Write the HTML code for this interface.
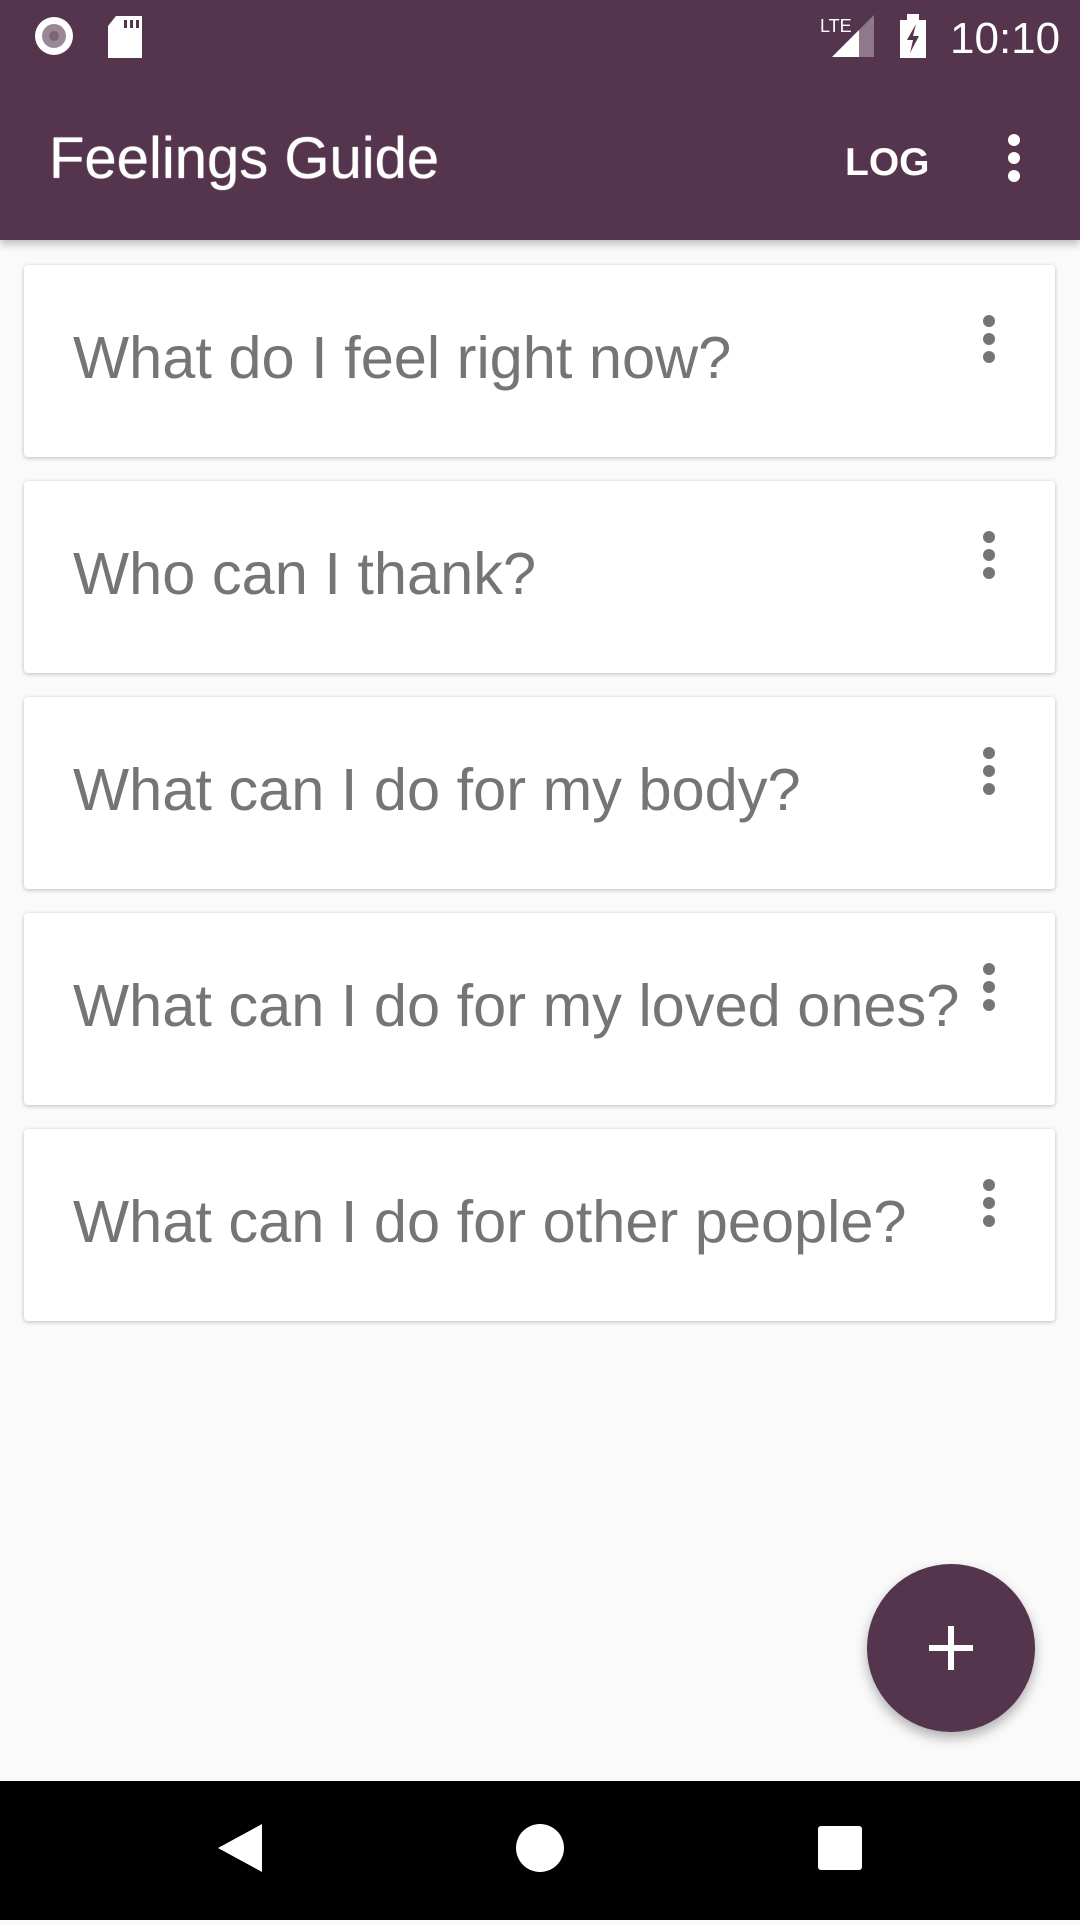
<!DOCTYPE html>
<html><head><meta charset="utf-8"><style>
*{margin:0;padding:0;box-sizing:border-box}
body{width:1080px;height:1920px;background:#fafafa;font-family:"Liberation Sans",sans-serif;position:relative;overflow:hidden}
.top{position:absolute;left:0;top:0;width:1080px;height:240px;background:#55354d;box-shadow:0 4px 8px rgba(0,0,0,.25)}
.title{position:absolute;left:49px;top:124px;font-size:58px;color:#fff;line-height:70px;text-shadow:0 0 1px #fff}
.log{position:absolute;left:845px;top:138px;font-size:39px;color:#fff;line-height:50px;font-weight:bold}
.time{position:absolute;left:950px;top:14px;font-size:44px;color:#fff}
.card{position:absolute;left:24px;width:1031px;height:192px;background:#fff;border-radius:4px;box-shadow:0 1px 4px rgba(0,0,0,.25)}
.card .t{position:absolute;left:49px;top:58px;font-size:59.5px;color:#757575;white-space:nowrap}
.dots{position:absolute;width:12px}
.dots i{display:block;width:12px;height:12px;border-radius:50%;background:#757575;margin-bottom:6px}
.top .dots i{background:#fff}
.fab{position:absolute;left:867px;top:1564px;width:168px;height:168px;border-radius:50%;background:#55354d;box-shadow:0 6px 12px rgba(0,0,0,.3)}
.nav{position:absolute;left:0;top:1781px;width:1080px;height:139px;background:#000}
</style></head><body>
<div class="top">
<svg width="1080" height="90" style="position:absolute;left:0;top:0">
<circle cx="54" cy="36" r="19" fill="#fff"/><circle cx="54" cy="36" r="12" fill="#9a8896"/><circle cx="54" cy="36" r="5" fill="#7a6676"/>
<path d="M116 16h26v42h-34v-32z" fill="#fff"/><rect x="124" y="20" width="3" height="8" fill="#55354d"/><rect x="130" y="20" width="3" height="8" fill="#55354d"/><rect x="136" y="20" width="3" height="8" fill="#55354d"/>
<text x="820" y="32" font-size="18" fill="#fff" font-family="Liberation Sans">LTE</text>
<path d="M832 57L874 15V57Z" fill="#8f7889"/><path d="M832 57L859 30V57Z" fill="#fff"/>
<rect x="900" y="20" width="26" height="38" fill="#fff"/><rect x="907" y="14" width="12" height="6" fill="#fff"/>
<path d="M916 24l-9 16h6l-3 13 9-17h-6z" fill="#55354d"/>
</svg>
<div class="time">10:10</div>
<div class="title">Feelings Guide</div>
<div class="log">LOG</div>
<div class="dots" style="left:1008px;top:134px"><i></i><i></i><i></i></div>
</div>
<div class="card" style="top:265px"><div class="t">What do I feel right now?</div><div class="dots" style="left:959px;top:50px"><i></i><i></i><i></i></div></div>
<div class="card" style="top:481px"><div class="t">Who can I thank?</div><div class="dots" style="left:959px;top:50px"><i></i><i></i><i></i></div></div>
<div class="card" style="top:697px"><div class="t">What can I do for my body?</div><div class="dots" style="left:959px;top:50px"><i></i><i></i><i></i></div></div>
<div class="card" style="top:913px"><div class="t">What can I do for my loved ones?</div><div class="dots" style="left:959px;top:50px"><i></i><i></i><i></i></div></div>
<div class="card" style="top:1129px"><div class="t">What can I do for other people?</div><div class="dots" style="left:959px;top:50px"><i></i><i></i><i></i></div></div>
<div class="fab"><svg width="168" height="168"><path d="M84 62v44M62 84h44" stroke="#fff" stroke-width="6"/></svg></div>
<div class="nav"><svg width="1080" height="139">
<path d="M218 67L262 43V91Z" fill="#fff"/>
<circle cx="540" cy="67" r="24" fill="#fff"/>
<rect x="818" y="45" width="44" height="44" rx="3" fill="#fff"/>
</svg></div>
</body></html>
